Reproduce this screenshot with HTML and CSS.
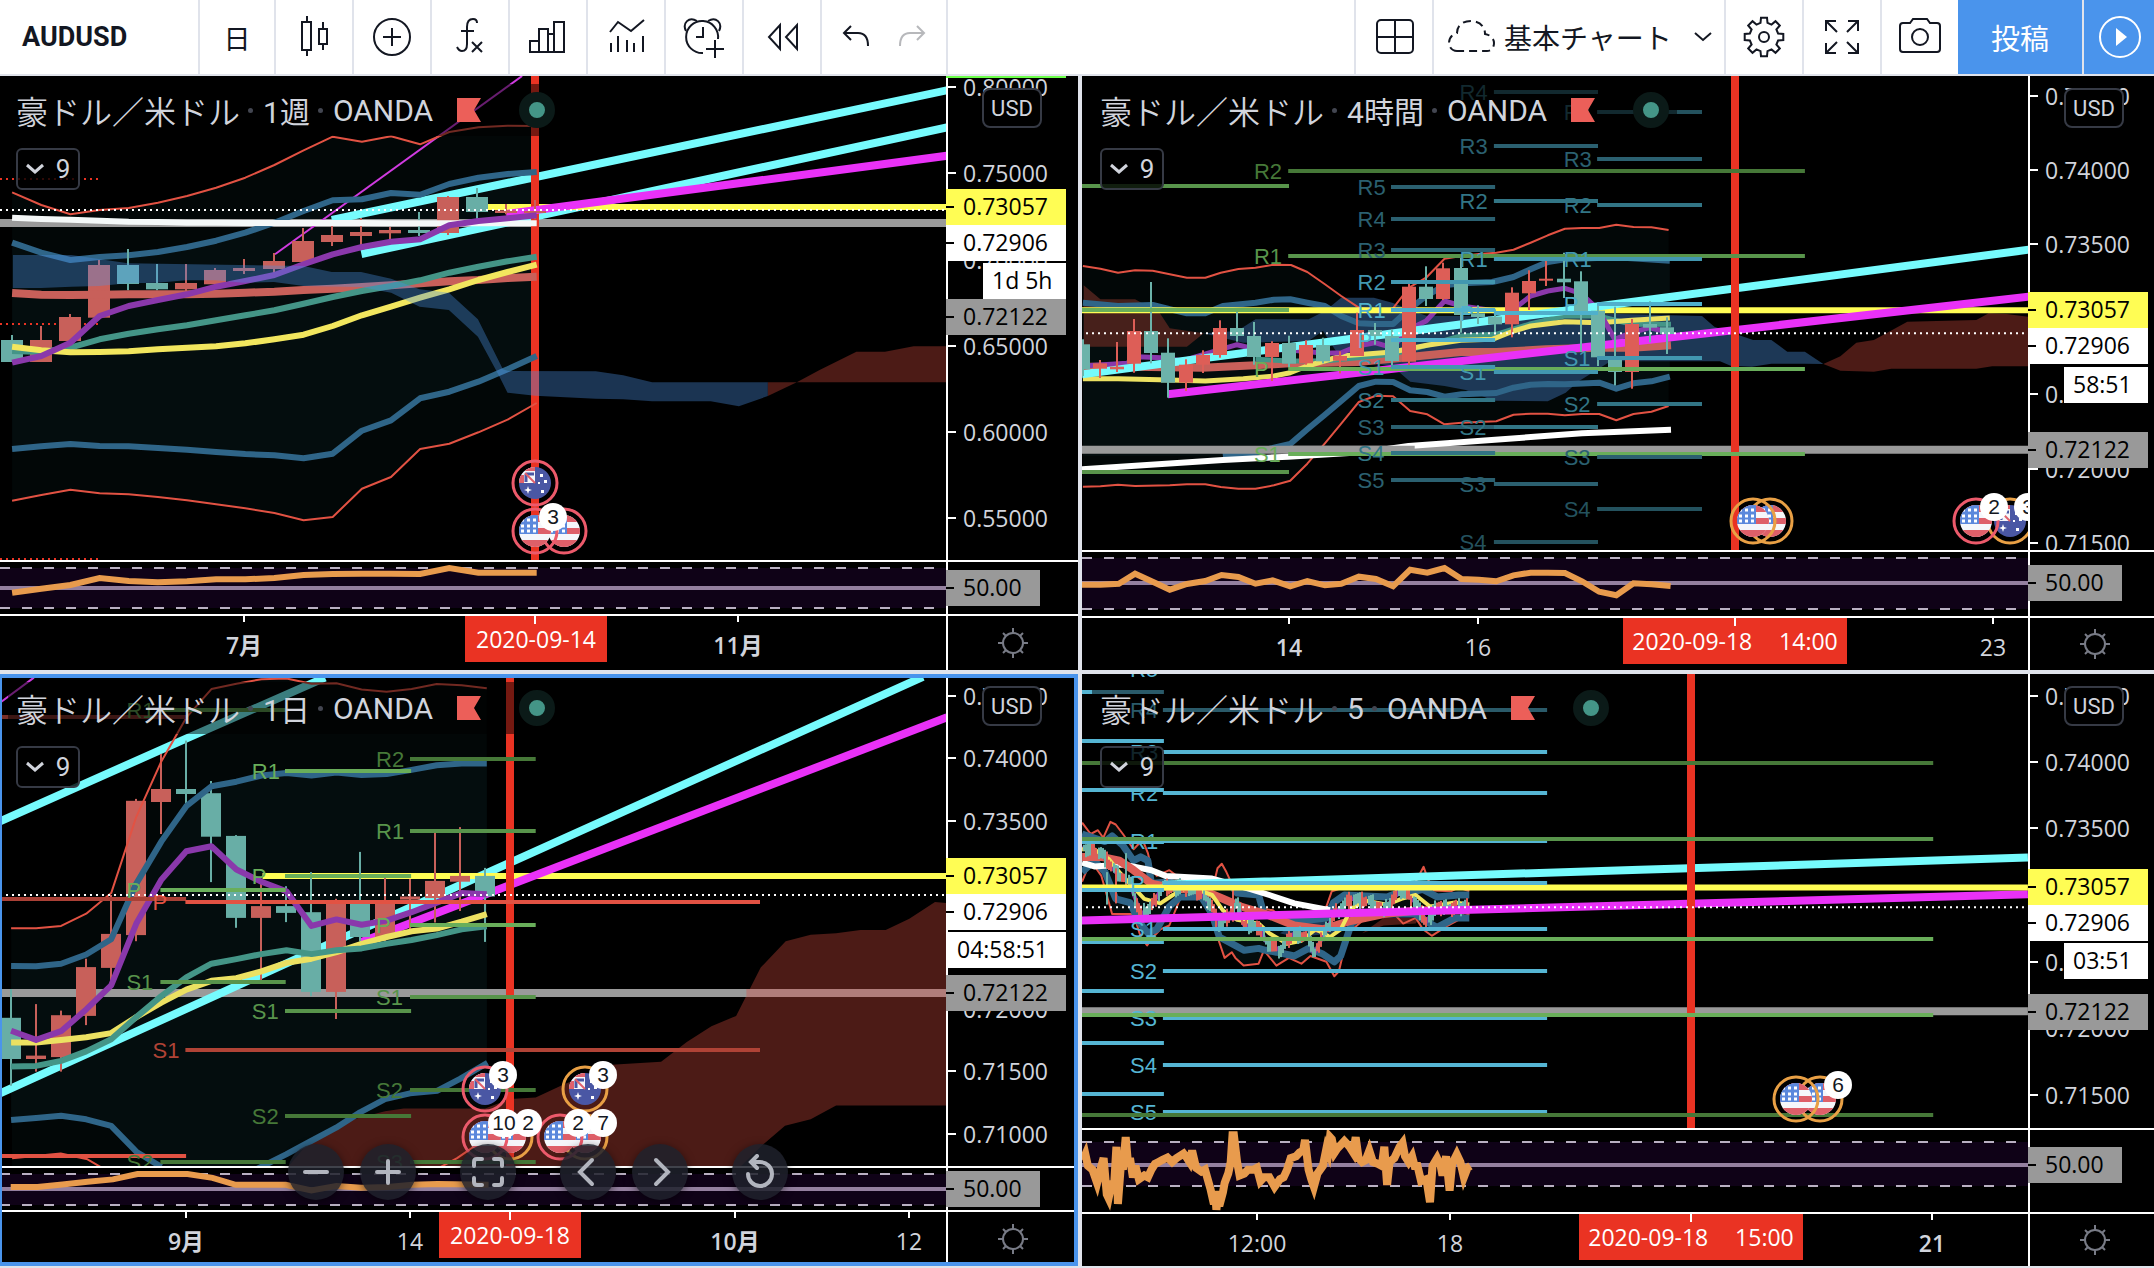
FILE: index.html
```html
<!DOCTYPE html>
<html lang="ja">
<head>
<meta charset="utf-8">
<title>AUDUSD チャート</title>
<link rel="stylesheet" href="styles.css">
</head>
<body>
<header class="toolbar">
  <button class="tool symbol">AUDUSD</button>
  <button class="tool tool-interval">日</button>
  <button class="tool" aria-label="ローソク足"><svg class="icon" viewBox="0 0 44 44"><path d="M10 7h9v28h-9zM15 1v6M15 35v6M27 14h8v15h-8zM31 7v7M31 29v6"/></svg></button>
  <button class="tool" aria-label="比較"><svg class="icon" viewBox="0 0 44 44"><circle cx="22" cy="22" r="18"/><path d="M22 13v18M13 22h18"/></svg></button>
  <button class="tool" aria-label="インジケーター"><svg class="icon" viewBox="0 0 44 44"><path d="M29 8c0-3-1-4-4-4-4 0-6 3-6 8v17c0 5-2 7-5 7-3 0-4-2-5-4M13 16h13M24 27l10 10M34 27L24 37"/></svg></button>
  <button class="tool" aria-label="財務"><svg class="icon" viewBox="0 0 44 44"><path d="M4 37V26h9V14h9v5h6V7h10v30zM13 26v11M22 19v18M28 19v18"/></svg></button>
  <button class="tool" aria-label="テンプレート"><svg class="icon" viewBox="0 0 44 44"><path d="M6 17l8-10 13 9L40 5M7 28v9M14 21v16M23 25v12M30 28v9M39 21v16"/></svg></button>
  <button class="tool" aria-label="アラート"><svg class="icon" viewBox="0 0 44 44"><path d="M21 38A16 16 0 1 1 36 24M21 12v10h-7M33 25v18M24 34h18"/><path d="M4 16C0 8 7 1 15 6M26 6c8-5 15 2 11 10"/></svg></button>
  <button class="tool" aria-label="リプレイ"><svg class="icon" viewBox="0 0 44 44"><path d="M20 10v24L9 22zM37 10v24L26 22z"/></svg></button>
  <div class="history">
    <button class="plain" aria-label="元に戻す"><svg class="icon" viewBox="0 0 44 44"><path d="M17 11l-7 7 7 7M10 18h14c6 0 10 4 10 13"/></svg></button>
    <button class="plain redo" aria-label="やり直す"><svg class="icon" viewBox="0 0 44 44"><path d="M27 11l7 7-7 7M34 18H20c-6 0-10 4-10 13"/></svg></button>
  </div>
  <div class="spacer"></div>
  <button class="tool" aria-label="レイアウト"><svg class="icon" viewBox="0 0 44 44"><rect x="5" y="5" width="36" height="33" rx="4"/><path d="M23 5v33M5 22h36"/></svg></button>
  <button class="tool layout-name">
    <svg class="icon cloud" viewBox="0 0 48 44"><path d="M9 36C4 36 1 32 1 28c0-6 4-9 8-10C9 10 15 6 23 6c8 0 14 5 14 13 6 1 9 5 9 9 0 5-3 8-7 8z"/></svg>
    <span>基本チャート</span>
    <svg class="chevron" viewBox="0 0 18 12"><path d="M1 2l8 7 8-7"/></svg>
  </button>
  <button class="tool" aria-label="設定"><svg class="icon" viewBox="0 0 44 44"><path d="M18.500 7.900L19 2.700H25L25.500 7.900L29.500 9.600L33.500 6.200L37.800 10.500L34.400 14.500L36.100 18.500L41.300 19V25L36.100 25.500L34.400 29.500L37.800 33.500L33.500 37.800L29.500 34.400L25.500 36.100L25 41.300H19L18.500 36.100L14.500 34.400L10.500 37.800L6.200 33.500L9.600 29.500L7.900 25.500L2.700 25V19L7.900 18.500L9.600 14.500L6.200 10.500L10.500 6.200L14.500 9.600Z"/><circle cx="22" cy="22" r="5"/></svg></button>
  <button class="tool" aria-label="全画面"><svg class="icon" viewBox="0 0 44 44"><path d="M6 16V6h10M6 6l11 11M28 6h10v10M38 6L27 17M6 28v10h10M6 38l11-11M28 38h10V28M38 38L27 27"/></svg></button>
  <button class="tool last" aria-label="スナップショット"><svg class="icon" viewBox="0 0 44 44"><path d="M5 8h7l3-4h14l3 4h7q3 0 3 3v23q0 3-3 3H5q-3 0-3-3V11q0-3 3-3z"/><circle cx="22" cy="22" r="8"/></svg></button>
  <button class="publish">投稿</button>
  <button class="play" aria-label="配信"><svg class="icon" viewBox="0 0 44 44"><circle cx="23" cy="22" r="20"/><path class="solid" d="M19 13v18l11-9z"/></svg></button>
</header>

<main class="charts">
  <section class="pane" data-pane="week">
    <div class="plot-row">
      <div class="plot"><svg class="canvas" data-part="plot"></svg>
        <div class="legend"><span>豪ドル／米ドル</span><i class="sep"></i><span>1週</span><i class="sep"></i><span>OANDA</span><svg class="flag" viewBox="0 0 24 24"><path d="M0 0h24l-7 12 7 12H0z"/></svg><i class="status"></i></div>
        <button class="toggle"><svg class="chevron" viewBox="0 0 18 12"><path d="M1 2l8 7 8-7"/></svg>9</button>
      </div>
      <div class="axis"><svg class="canvas" data-part="axis"></svg><button class="currency">USD</button></div>
    </div>
    <div class="rsi-row"><div class="plot"><svg class="canvas" data-part="rsi"></svg></div><div class="axis"><svg class="canvas" data-part="level"></svg></div></div>
    <div class="time-row"><div class="plot"><svg class="canvas" data-part="time"></svg></div><button class="corner" aria-label="軸の設定"><svg class="sun" viewBox="0 0 32 32"><use href="#sun"/></svg></button></div>
  </section>

  <section class="pane right" data-pane="hour4">
    <div class="plot-row">
      <div class="plot"><svg class="canvas" data-part="plot"></svg>
        <div class="legend"><span>豪ドル／米ドル</span><i class="sep"></i><span>4時間</span><i class="sep"></i><span>OANDA</span><svg class="flag" viewBox="0 0 24 24"><path d="M0 0h24l-7 12 7 12H0z"/></svg><i class="status"></i></div>
        <button class="toggle"><svg class="chevron" viewBox="0 0 18 12"><path d="M1 2l8 7 8-7"/></svg>9</button>
      </div>
      <div class="axis"><svg class="canvas" data-part="axis"></svg><button class="currency">USD</button></div>
    </div>
    <div class="rsi-row"><div class="plot"><svg class="canvas" data-part="rsi"></svg></div><div class="axis"><svg class="canvas" data-part="level"></svg></div></div>
    <div class="time-row"><div class="plot"><svg class="canvas" data-part="time"></svg></div><button class="corner" aria-label="軸の設定"><svg class="sun" viewBox="0 0 32 32"><use href="#sun"/></svg></button></div>
  </section>

  <section class="pane active" data-pane="day">
    <div class="plot-row">
      <div class="plot"><svg class="canvas" data-part="plot"></svg>
        <div class="legend"><span>豪ドル／米ドル</span><i class="sep"></i><span>1日</span><i class="sep"></i><span>OANDA</span><svg class="flag" viewBox="0 0 24 24"><path d="M0 0h24l-7 12 7 12H0z"/></svg><i class="status"></i></div>
        <button class="toggle"><svg class="chevron" viewBox="0 0 18 12"><path d="M1 2l8 7 8-7"/></svg>9</button>
      </div>
      <div class="axis"><svg class="canvas" data-part="axis"></svg><button class="currency">USD</button></div>
    </div>
    <div class="rsi-row"><div class="plot"><svg class="canvas" data-part="rsi"></svg></div><div class="axis"><svg class="canvas" data-part="level"></svg></div></div>
    <div class="time-row"><div class="plot"><svg class="canvas" data-part="time"></svg></div><button class="corner" aria-label="軸の設定"><svg class="sun" viewBox="0 0 32 32"><use href="#sun"/></svg></button></div>
    <div class="nav">
      <div class="nav-group">
        <button class="round" aria-label="縮小"><svg viewBox="0 0 36 36"><path d="M7 18h22"/></svg></button>
        <button class="round" aria-label="拡大"><svg viewBox="0 0 36 36"><path d="M7 18h22M18 7v22"/></svg></button>
      </div>
      <button class="round" aria-label="範囲"><svg viewBox="0 0 36 36"><path d="M4 12V8q0-3 3-3h5M24 5h5q3 0 3 3v4M32 24v4q0 3-3 3h-5M12 31H7q-3 0-3-3v-4"/></svg></button>
      <div class="nav-group">
        <button class="round" aria-label="左へ"><svg viewBox="0 0 36 36"><path d="M22 6L10 18l12 12"/></svg></button>
        <button class="round" aria-label="右へ"><svg viewBox="0 0 36 36"><path d="M14 6l12 12-12 12"/></svg></button>
      </div>
      <button class="round" aria-label="リセット"><svg viewBox="0 0 36 36"><path d="M6 20a12 12 0 1 0 12-12h-8M15 2L9 8l6 6"/></svg></button>
    </div>
  </section>

  <section class="pane right" data-pane="min5">
    <div class="plot-row">
      <div class="plot"><svg class="canvas" data-part="plot"></svg>
        <div class="legend"><span>豪ドル／米ドル</span><i class="sep"></i><span>5</span><i class="sep"></i><span>OANDA</span><svg class="flag" viewBox="0 0 24 24"><path d="M0 0h24l-7 12 7 12H0z"/></svg><i class="status"></i></div>
        <button class="toggle"><svg class="chevron" viewBox="0 0 18 12"><path d="M1 2l8 7 8-7"/></svg>9</button>
      </div>
      <div class="axis"><svg class="canvas" data-part="axis"></svg><button class="currency">USD</button></div>
    </div>
    <div class="rsi-row"><div class="plot"><svg class="canvas" data-part="rsi"></svg></div><div class="axis"><svg class="canvas" data-part="level"></svg></div></div>
    <div class="time-row"><div class="plot"><svg class="canvas" data-part="time"></svg></div><button class="corner" aria-label="軸の設定"><svg class="sun" viewBox="0 0 32 32"><use href="#sun"/></svg></button></div>
  </section>
</main>

<svg class="defs" aria-hidden="true">
  <defs>
    <g id="sun"><circle cx="16" cy="16" r="10"/><path d="M16 1v5M16 26v5M1 16h5M26 16h5M6 6l3 3M23 23l3 3M26 6l-3 3M9 23l-3 3"/></g>
    <clipPath id="disc"><circle r="16"/></clipPath>
    <g id="us" clip-path="url(#disc)">
      <path fill="#f5f6fa" d="M-16-16h32v32h-32z"/>
      <path fill="#de5f69" d="M-16-16h32v7h-32zM-16-3h32v6h-32zM-16 9h32v7h-32z"/>
      <path fill="#5b88dc" d="M-16-16H3V3h-19z"/>
      <path stroke="#fff" stroke-width="3" stroke-dasharray="3 3" d="M-14-11H2M-14-5H2M-14 0H2"/>
    </g>
    <g id="au" clip-path="url(#disc)">
      <path fill="#4a57a4" d="M-16-16h32v32h-32z"/>
      <path fill="#f5f6fa" d="M-16-16H0V0h-16z"/>
      <path fill="#e0616c" d="M-16-16H0v4h-16zM-16-8h5v8h-5z"/>
      <path stroke="#4a57a4" stroke-width="3" d="M-9-9H-1M-9-9V-1"/>
      <path stroke="#e0616c" stroke-width="2" d="M-10-10L0 0"/>
      <path fill="#fff" d="M-7 3l1 3 3 1-3 1-1 3-1-3-3-1 3-1zM6 7h3v3H6zM5-9h3v3H5zM9-3h3v3H9zM3-1h2v2H3z"/>
    </g>
  </defs>
</svg>
<script src="charts.js"></script>
</body>
</html>
```

FILE: styles.css
```css
* { box-sizing: border-box; }

body {
  margin: 0;
  height: 100vh;
  display: flex;
  flex-direction: column;
  background: #e0e3eb;
  font-family: Roboto, "Noto Sans CJK JP", sans-serif;
  color: #131722;
}

button {
  margin: 0;
  padding: 0;
  border: 0;
  background: none;
  color: inherit;
  font: inherit;
}

.defs { position: absolute; width: 0; height: 0; }

/* toolbar */
.toolbar {
  flex: none;
  display: flex;
  height: 76px;
  background: #fff;
  border-bottom: 2px solid #e0e3eb;
}
.tool {
  flex: none;
  width: 78px;
  display: flex;
  align-items: center;
  justify-content: center;
  border-right: 2px solid #e0e3eb;
}
.tool.last { width: 76px; border-right: 0; }
.tool-interval { width: 76px; font-size: 27px; }
.symbol {
  width: 200px;
  padding-left: 22px;
  justify-content: flex-start;
  font-size: 27px;
  font-weight: 700;
}
.icon { width: 44px; height: 44px; fill: none; stroke: #131722; stroke-width: 2; }
.history {
  flex: none;
  width: 126px;
  display: flex;
  align-items: center;
  justify-content: center;
  gap: 12px;
  border-right: 2px solid #e0e3eb;
}
.plain { width: 44px; height: 44px; }
.redo { opacity: .3; }
.spacer { flex: 1; border-right: 2px solid #e0e3eb; }
.layout-name {
  width: 292px;
  padding: 0 12px 0 14px;
  justify-content: flex-start;
  gap: 8px;
  font-size: 28px;
}
.cloud { width: 48px; stroke-dasharray: 8 5; }
.chevron { width: 18px; height: 12px; fill: none; stroke: currentColor; stroke-width: 2; }
.layout-name .chevron { margin-left: auto; }
.publish {
  flex: none;
  width: 124px;
  background: #4a94ec;
  color: #fff;
  font-size: 29px;
}
.play {
  flex: none;
  width: 72px;
  display: flex;
  align-items: center;
  justify-content: center;
  border-left: 2px solid #e0e3eb;
  background: #4a94ec;
}
.play .icon { stroke: #fff; }
.play .solid { fill: #fff; stroke: none; }

/* chart grid */
.charts {
  flex: 1;
  min-height: 0;
  display: grid;
  grid-template-columns: 1078fr 1072fr;
  grid-template-rows: 594fr 592fr;
  gap: 4px;
  padding-bottom: 2px;
}
.pane {
  position: relative;
  min-width: 0;
  min-height: 0;
  display: flex;
  flex-direction: column;
  background: #000;
  color: #d1d4dc;
}
.pane.active::after {
  content: "";
  position: absolute;
  inset: 0;
  border: 4px solid #4a94ec;
  border-left-width: 2px;
  pointer-events: none;
}
.plot-row, .rsi-row, .time-row { display: flex; }
.plot-row { flex: 1; min-height: 0; }
.rsi-row, .time-row { flex: none; border-top: 2px solid #fff; }
.rsi-row { height: 54px; }
.time-row { height: 56px; }
.right .time-row { height: 54px; }
[data-pane="hour4"] .rsi-row { height: 66px; }
[data-pane="day"] .rsi-row { height: 44px; }
[data-pane="min5"] .rsi-row { height: 84px; }
.plot { position: relative; flex: 1; min-width: 0; overflow: hidden; }
.axis { position: relative; flex: none; width: 132px; overflow: hidden; }
.right .axis { width: 126px; }
.canvas { display: block; width: 100%; height: 100%; }

.legend {
  position: absolute;
  top: 8px;
  left: 8px;
  height: 52px;
  padding: 0 8px;
  display: flex;
  align-items: center;
  background: rgba(0, 0, 0, .5);
  white-space: nowrap;
}
.legend span { font-size: 30px; }
.legend span:first-child { font-size: 32px; font-weight: 350; }
.right .legend { left: 10px; }
.sep {
  width: 5px;
  height: 5px;
  margin: 0 10px 0 8px;
  border-radius: 50%;
  background: #434651;
}
.flag { width: 24px; height: 24px; margin: 0 38px 0 24px; fill: #ec5f59; }
.status {
  width: 36px;
  height: 36px;
  border: 10px solid #0b1a18;
  border-radius: 50%;
  background: #449587;
}
.toggle {
  position: absolute;
  top: 72px;
  left: 16px;
  width: 64px;
  height: 42px;
  display: flex;
  align-items: center;
  justify-content: center;
  gap: 12px;
  border: 2px solid #363a45;
  border-radius: 6px;
  background: rgba(0, 0, 0, .8);
  font-size: 26px;
}
.right .toggle { left: 18px; }
.toggle .chevron { stroke-width: 3; }
.currency {
  position: absolute;
  top: 12px;
  left: 36px;
  width: 60px;
  height: 40px;
  border: 2px solid #363a45;
  border-radius: 8px;
  background: #000;
  font-size: 22px;
}
.corner {
  flex: none;
  width: 132px;
  display: flex;
  align-items: center;
  justify-content: center;
  border-left: 2px solid #fff;
}
.right .corner { width: 126px; padding-left: 6px; }
.sun { width: 32px; height: 32px; fill: none; stroke: #787b86; stroke-width: 2; }

/* floating controls of the active pane */
.nav {
  position: absolute;
  bottom: 66px;
  left: 0;
  right: 2px;
  z-index: 1;
  display: flex;
  justify-content: center;
  gap: 44px;
}
.nav-group { display: flex; gap: 16px; }
.round {
  width: 56px;
  height: 56px;
  display: flex;
  align-items: center;
  justify-content: center;
  border-radius: 50%;
  background: rgba(30, 33, 43, .85);
  box-shadow: 0 2px 8px rgba(0, 0, 0, .5);
}
.round svg { width: 36px; height: 36px; fill: none; stroke: #b2b5be; stroke-width: 4; stroke-linecap: round; }

/* drawn text */
.price, .tag-text, .date, .date-box { font-family: "Open Sans", "Noto Sans CJK JP", sans-serif; font-size: 23px; }
.price, .date { fill: #d1d4dc; font-weight: 500; }
.date.strong { font-weight: 600; }
.tag-text { fill: #000; }
.date-box { fill: #fff; }
.pivot { font-family: "Liberation Sans", sans-serif; font-size: 22px; }
.count { font-family: "Liberation Sans", sans-serif; font-size: 21px; fill: #131722; }
```

FILE: charts.js
```js
const RED = '#c8605a', GREEN = '#68aea6', BLUE = '#2f6588', CYAN = '#76fbfd', MAGENTA = '#e931f7';
const YELLOW = '#fffd54', CLOUD_UP = 'rgba(74,144,226,.36)', CLOUD_DOWN = '#4c1b16', LINE_RED = '#e25243';

// Series with evenly spaced bars: x start, x step, values
const even = (x0, dx, ys) => ys.flatMap((y, i) => [x0 + dx * i, y]);

// 5 minute price path
const path5 = [6,465,60,480,100,530,140,560,170,640,200,620,230,570,300,570,340,585,370,620,390,670,420,640,440,610,460,670,500,670,520,710,560,735,600,690,640,700,655,745,690,680,720,630,760,600,820,610,850,630,900,575,940,610,970,660,1000,620,1040,625,1090,615];

function bars5() {
  const out = [];
  for (let x = 10, n = 0; x < 1090; x += 6, n++) {
    let i = 0;
    while (i < path5.length - 4 && path5[i + 2] < x) i += 2;
    const t = (x - path5[i]) / (path5[i + 2] - path5[i]);
    const y = path5[i + 1] + t * (path5[i + 3] - path5[i + 1]);
    const a = 8 + (n * 37 % 17), b = 8 + (n * 53 % 19);
    out.push([x, y - a, y + b, y - a / 2, y + b / 2, n * 29 % 7 < 4 ? 'g' : 'r']);
  }
  out.push([128, 480, 560, 490, 540, 'g'], [429, 562, 660, 570, 640, 'r'], [102, 520, 612, 530, 600, 'r'], [76, 530, 615, 540, 600, 'g'], [898, 548, 600, 560, 590, 'g']);
  return out;
}

const W0 = 34, WD = 81.6, D0 = 31, DD = 70.1;
const wUp = even(W0, WD, [349,387,415,402,396,380,360,335,305,267,223,182,197,181,205,168,154,149,150]);
const wLow = even(W0, WD, [1274,1257,1241,1252,1255,1263,1273,1285,1297,1311,1333,1323,1238,1203,1119,1103,1069,1031,981]);
const wBlueUp = even(W0, WD, [500,530,552,543,538,528,513,494,470,440,405,373,370,351,356,324,305,294,288]);
const wBlueLow = even(W0, WD, [1119,1111,1104,1110,1111,1116,1121,1128,1134,1138,1147,1133,1064,1033,967,947,917,880,840]);
const hUp = [7,570,50,578,93,590,135,583,178,584,220,595,262,605,307,605,345,590,388,579,430,575,475,566,517,567,557,588,600,625,640,660,683,695,725,702,765,700,806,635,848,605,893,548,935,540,977,534,1020,530,1062,521,1104,500,1146,478,1188,458,1230,456,1272,456,1314,446,1356,453,1400,454,1442,462];
const hLow = [7,1232,50,1231,93,1226,135,1230,220,1228,262,1225,307,1225,345,1233,388,1238,430,1238,475,1228,515,1214,557,1163,600,1102,640,1043,683,978,725,959,767,961,809,1005,851,1015,893,1045,935,1040,1020,1036,1062,1016,1104,1013,1146,1013,1188,1018,1230,1014,1272,1014,1314,1033,1356,1014,1400,1007,1442,990];
const hBlueUp = [7,680,93,690,178,687,262,712,307,712,350,690,430,680,475,671,515,670,557,680,600,690,640,720,683,742,725,744,767,744,806,700,848,660,893,628,935,622,1010,618,1062,603,1104,580,1146,558,1188,550,1314,544,1445,554];
const hBlueLow = [350,1140,430,1130,475,1115,515,1104,557,1060,600,1016,640,975,683,930,725,917,767,918,809,943,851,948,893,962,935,955,1020,951,1062,935,1104,926,1146,924,1188,925,1272,920,1314,938,1356,922,1400,916,1445,902];
const dUp = even(D0, DD, [677,677,671,639,585,385,240,125,50,36,24,22,36,35,51,57,50,37,40,48]);
const dBlueUp = even(D0, DD, [776,777,770,746,706,560,450,357,305,293,277,270,277,269,275,273,262,250,245,245]);
const mUp = [6,400,30,430,50,420,65,440,85,398,100,405,120,430,150,470,175,445,190,480,200,520,215,540,250,525,300,560,340,560,375,560,385,520,397,508,410,530,420,550,440,575,500,580,510,625,540,630,580,660,620,650,650,640,690,620,705,580,740,570,800,575,860,575,900,560,940,555,962,516,975,550,990,578,1040,580,1060,570,1090,580];
const mLow = [6,555,30,500,60,540,90,640,115,640,150,640,170,700,188,722,205,700,225,680,250,670,280,600,340,600,370,640,385,700,405,755,425,740,435,755,458,775,500,770,515,735,550,775,585,755,620,770,645,750,690,765,712,803,725,790,750,690,800,650,880,640,905,665,940,650,960,680,985,697,1030,670,1090,640];

const reverse = p => { const o = []; for (let i = p.length - 2; i >= 0; i -= 2) o.push(p[i], p[i + 1]); return o; };

const green = ['#467838', '#58944b', '#69ae5a'];
const teal = ['#24525e', '#2b6070', '#327585', '#4297b0', '#4fb0cc'];

// view: horizontal units per px, vertical units per px, x shift, y shift
const panes = {
  week: {
    view: [2.8, 3, 0, 0],
    layers: [
      ['area', '#020707', [...wUp, ...reverse(wLow)]],
      ['area', '#040d0e', [...wBlueUp, ...reverse(wBlueLow)]],
      ['line', '#9a9a9a', 8, [0,441,2652,441]],
      ['line', CYAN, 8, [929,432,2652,43]],
      ['line', CYAN, 8, [1012,534,2652,154]],
      ['line', YELLOW, 6, [1366,393,2652,393]],
      ['line', '#d03be0', 2, [770,535,1462,0]],
      ['dots', '#ea3323', [0,309,280,309]], ['dots', '#ea3323', [0,744,280,744]], ['dots', '#ea3323', [0,1449,280,1449]],
      ['vline', 1498],
      ['line', MAGENTA, 8, [1417,414,2652,239]],
      ['line', LINE_RED, 2, wUp], ['line', LINE_RED, 2, wLow],
      ['line', BLUE, 6, wBlueUp], ['line', BLUE, 6, wBlueLow],
      ['bars', 31, [[34,777,858,792,858,'g'],[115,750,858,792,858,'r'],[196,714,795,723,795,'r'],[277,552,725,567,725,'r'],[358,519,643,567,624,'g'],[440,564,643,621,640,'g'],[521,564,645,621,640,'r'],[602,576,625,582,625,'r'],[683,549,594,576,585,'r'],[767,531,588,555,579,'r'],[848,456,558,495,558,'r'],[929,432,510,477,498,'r'],[1011,426,510,468,480,'r'],[1092,453,490,462,472,'r'],[1173,408,480,462,471,'g'],[1255,360,477,363,471,'r'],[1335,336,428,363,408,'g'],[1417,384,415,403,411,'r'],[1498,372,430,405,411,'r']]],
      ['line', '#f4f8f8', 6, even(W0, WD, [425,429,431,434,437,438,440,440,441,441,441,441,441,442,442,442,442,442,442])],
      ['line', RED, 8, even(W0, WD, [651,656,657,656,655,655,655,653,650,647,642,638,633,628,622,616,612,606,602])],
      ['line', '#449587', 6, even(W0, WD, [825,828,815,790,773,760,748,733,718,703,683,663,645,630,613,590,572,556,542])],
      ['line', '#f2e65e', 6, even(W0, WD, [812,823,829,828,826,820,815,811,802,790,776,750,718,692,665,640,612,588,566])],
      ['line', '#8a38ab', 6, even(W0, WD, [860,840,800,720,690,672,655,632,615,597,565,535,513,497,490,448,435,427,418])],
      ['area', CLOUD_UP, [36,537,200,537,358,562,850,570,929,588,1011,588,1095,608,1175,640,1257,650,1338,730,1408,880,1423,885,1668,886,1745,898,1826,919,2150,919,2150,960,2069,991,1990,976,1826,976,1745,970,1668,968,1498,959,1421,950,1395,895,1338,782,1257,702,1175,692,1095,650,1011,633,850,630,767,618,683,620,602,613,521,613,440,620,358,622,277,630,200,632,115,636,36,636]],
      ['area', CLOUD_DOWN, [2150,919,2231,919,2150,960]],
      ['area', CLOUD_DOWN, [2231,919,2295,882,2398,827,2478,827,2558,811,2652,811,2652,919]],
      ['dots', '#fff', [0,402,2652,402]]
    ],
    events: [['us',564,455,'#ec5a6b'],['us',535,455,'#ec5a6b'],['au',535,407,'#ec5a6b']],
    counts: [['3',553,441]],
    ticks: [['0.80000',11],['0.75000',97],['0.70000',184],['0.65000',270],['0.60000',356],['0.55000',442]],
    last: 131, timer: ['1d 5h', 37, 187, 46], grey: 241,
    rsi: { low: 6, mid: 26, high: 46, points: even(W0, WD, [92,80,69,48,57,61,58,52,52,48,39,36,35,35,36,18,32,32,32]), width: 6 },
    dates: [['7月',244,1],['11月',738,1]], box: ['2020-09-14', 465, 142, 535]
  },
  hour4: {
    view: [2.45, 3, -2, 0],
    layers: [
      ['area', '#020707', [...hUp, ...reverse(hLow)]],
      ['area', '#040d0e', [...hBlueUp, ...reverse(hBlueLow), 7,1140]],
      ['area', '#47201b', [9,628,50,670,135,670,195,710,220,757,303,772,262,812,9,812]],
      ['area', '#1d3856', [303,772,385,765,430,730,560,730,600,705,640,665,720,665,765,680,806,700,850,720,1100,720,1200,710,1524,720,1554,752,1649,792,1694,792,1733,827,1776,827,1821,864,1776,863,1694,863,1646,872,1594,869,1568,856,1300,856,1220,917,1190,950,1146,976,1015,974,945,942,893,930,809,917,765,870,640,850,595,765,560,795,400,800]],
      ['area', CLOUD_DOWN, [1821,864,1863,841,1902,800,1945,792,2027,737,2196,732,2226,712,2270,714,2325,723,2325,871,2235,871,2196,878,1988,878,1945,887,1863,884]],
      ['line', LINE_RED, 2, hUp], ['line', LINE_RED, 2, hLow],
      ['line', BLUE, 6, hBlueUp], ['line', BLUE, 6, hBlueLow],
      ['line', '#9a9a9a', 8, [0,1121,2325,1121]],
      ['line', '#fff', 6, [0,1180,350,1152,510,1142,700,1128,805,1110,1230,1072,1448,1061]],
      ['line', '#9a9a9a', 8, [515,1121,820,1121]],
      ['line', RED, 8, [7,872,130,872,300,875,430,868,515,862,600,860,680,858,765,848,850,838,933,828,1020,828,1142,820,1269,815,1352,815,1448,808]],
      ['line', '#449587', 5, [430,850,515,855,600,855,765,835,850,808,933,780,1020,775,1100,745,1186,720,1269,720,1352,745,1448,745]],
      ['line', '#ece162', 5, [7,908,93,908,220,912,307,915,400,908,475,900,515,890,557,870,640,840,765,828,850,808,933,793,1010,790,1062,765,1104,750,1188,737,1272,740,1352,733,1445,726]],
      ['line', '#8a38ab', 5, [7,870,115,862,140,842,200,845,250,855,345,820,385,806,430,820,515,822,600,832,640,830,680,810,722,800,765,815,806,760,848,735,893,675,935,690,1017,705,1062,700,1104,660,1146,645,1188,637,1227,652,1269,700,1310,790,1352,770,1396,755,1448,770]],
      ['line', YELLOW, 6, [0,703,2325,703]],
      ['line', CYAN, 8, [5,895,2325,521]],
      ['line', MAGENTA, 8, [215,955,2325,662]],
      ['bars', 17, [[7,790,900,805,880,'g'],[49,852,906,862,878,'r'],[90,798,888,872,880,'r'],[132,729,890,765,863,'r'],[174,618,862,765,831,'g'],[215,787,965,830,920,'g'],[260,850,945,866,920,'r'],[301,823,891,837,866,'r'],[343,733,845,756,837,'r'],[385,708,797,756,780,'g'],[426,738,866,780,843,'g'],[470,796,915,801,843,'r'],[512,779,873,801,863,'g'],[554,793,866,807,862,'r'],[595,785,862,807,856,'g'],[637,826,892,840,854,'r'],[679,710,840,762,840,'r'],[722,741,806,762,780,'g'],[765,760,870,780,855,'g'],[806,616,872,632,857,'r'],[848,571,690,632,669,'g'],[889,560,672,577,669,'r'],[933,544,770,576,717,'g'],[975,688,744,712,723,'g'],[1017,700,778,722,745,'g'],[1059,634,784,650,745,'r'],[1100,583,702,615,652,'r'],[1142,535,630,608,613,'r'],[1186,530,666,608,619,'g'],[1227,586,828,616,708,'g'],[1269,682,870,704,844,'g'],[1310,692,928,843,888,'g'],[1352,729,938,744,888,'r'],[1396,676,799,744,755,'g'],[1438,724,834,754,774,'g']], '#dd5e57', '#6cb3aa'],
      ['vline', 1605],
      ['pivots', 5, 512, 84, [['',330,green[1]],['',703,green[2]],['',1187,green[1]]]],
      ['pivots', 510, 1776, 84, [['R2',285,green[0]],['R1',541,green[1]],['P',878,green[2]],['S1',1133,green[2]]]],
      ['pivots', 762, 1017, 82, [['R5',333,teal[1]],['R4',429,teal[1]],['R3',522,teal[1]],['R2',619,teal[3]],['R1',701,teal[4]],['P',793,teal[4]],['S1',874,teal[3]],['S2',971,teal[2]],['S3',1053,teal[1]],['S4',1130,teal[2]],['S5',1211,teal[1]]]],
      ['pivots', 1014, 1269, 84, [['R4',47,teal[0]],['R3',210,teal[1]],['R2',375,teal[2]],['R1',550,teal[3]],['P',712,teal[4]],['S1',888,teal[3]],['S2',1052,teal[2]],['S3',1224,teal[1]],['S4',1398,teal[0]]]],
      ['pivots', 1267, 1524, 82, [['R4',108,teal[0]],['R3',249,teal[1]],['R2',387,teal[2]],['R1',548,teal[3]],['P',685,teal[4]],['S1',845,teal[3]],['S2',983,teal[2]],['S3',1143,teal[1]],['S4',1299,teal[0]]]],
      ['dots', '#fff', [0,772,2325,772]]
    ],
    events: [['us',688,445,'#e9a045'],['us',671,445,'#e9a045'],['au',928,445,'#e9a045'],['us',894,445,'#ec5a6b']],
    counts: [['2',912,431],['3',946,431]],
    ticks: [['0.74500',20],['0.74000',94],['0.73500',168],['0.72500',318],['0.72000',393],['0.71500',467]],
    last: 234, timer: ['58:51', 36, 291, 45], grey: 374,
    rsi: { low: 6, mid: 31, high: 57, width: 6, points: [5,98,50,98,95,95,135,65,178,89,220,113,262,96,307,87,347,69,388,75,430,95,472,85,515,103,557,87,600,100,640,95,683,74,725,81,767,103,809,53,851,62,893,48,935,81,977,83,1020,88,1062,70,1104,62,1146,62,1188,63,1230,88,1272,119,1314,130,1356,94,1400,97,1447,102] },
    dates: [['14',207,1],['16',396,0],['23',911,0]], box: ['2020-09-18\u2003\u200914:00', 541, 224, 653]
  },
  day: {
    view: [2.8, 2.622, 0, -4],
    layers: [
      ['area', '#020707', [...dUp, 1363,1310,34,1310]],
      ['area', '#040d0e', [...dBlueUp, 1363,1030,1288,1072,1225,1103,1148,1110,1078,1125,941,1200,735,1310,440,1300,381,1263,311,1195,241,1178,171,1169,31,1180]],
      ['area', CLOUD_DOWN, [800,1310,850,1255,960,1185,1078,1157,1130,1150,1358,1150,1428,1125,1500,1121,1575,1088,1712,1035,1851,1027,1923,975,1992,934,2061,907,2130,780,2200,711,2270,694,2341,690,2409,682,2480,682,2546,652,2618,608,2652,611,2652,1142,2341,1142,2270,1178,2198,1195,2130,1250,2065,1310]],
      ['line', '#9a9a9a', 8, [0,847,2095,847]], ['line', '#b07d7a', 8, [2090,847,2652,847]],
      ['line', CYAN, 8, [0,397,521,180,910,20]],
      ['line', CYAN, 8, [0,1110,930,715,2584,18]],
      ['line', YELLOW, 6, [735,540,2652,540]],
      ['line', MAGENTA, 8, [1010,714,2652,124]],
      ['line', '#d03be0', 2, [0,86,95,20]],
      ['bars', 28, [[31,837,1090,912,1020,'g'],[101,876,1053,1011,1020,'r'],[171,893,1053,905,1015,'r'],[241,757,931,779,907,'r'],[311,590,820,692,781,'r'],[381,338,711,343,695,'r'],[451,220,430,312,346,'r'],[521,185,350,312,325,'g'],[591,291,556,323,437,'g'],[661,433,676,435,650,'g'],[731,560,815,619,650,'r'],[801,567,661,619,637,'g'],[871,530,855,635,844,'g'],[941,600,915,612,844,'r'],[1008,477,712,612,700,'g'],[1078,545,712,612,700,'r'],[1148,548,680,594,602,'r'],[1218,420,662,553,598,'r'],[1288,412,632,540,555,'r'],[1358,519,713,540,594,'g']]],
      ['line', LINE_RED, 2, dUp], ['line', LINE_RED, 2, [34,1280,170,1268,245,1283,285,1305]], ['line', LINE_RED, 2, [1220,1310,1280,1280,1358,1230]],
      ['line', BLUE, 6, dBlueUp], ['line', BLUE, 6, even(D0, DD, [1180,1175,1169,1178,1195,1263,1303])],
      ['line', BLUE, 6, [720,1308,801,1270,871,1235,941,1200,1008,1160,1078,1125,1148,1110,1225,1103,1288,1072,1365,1030]],
      ['line', '#ece162', 6, even(D0, DD, [977,977,970,963,952,910,872,838,815,808,790,768,757,740,718,700,685,678,660,640])],
      ['line', '#449587', 6, even(D0, DD, [1040,1038,1025,1000,968,910,855,806,770,758,745,735,745,735,730,718,708,695,680,672])],
      ['line', '#8a38ab', 6, even(D0, DD, [946,970,947,890,827,665,550,475,462,523,555,580,671,654,668,657,635,610,585,588])],
      ['vline', 1428],
      ['pivots', 0, 521, 92, [['',123,'#7a2f28'],['',600,'#a94036'],['',1274,LINE_RED]]],
      ['pivots', 519, 2128, 92, [['P',608,LINE_RED],['S1',996,'#b04336']]],
      ['pivots', 449, 800, 95, [['R1',105,green[1]],['P',577,green[2]],['S1',818,green[1]],['S2',1290,green[0]]]],
      ['pivots', 798, 1151, 93, [['R1',265,green[2]],['P',540,green[2]],['S1',894,green[1]],['S2',1169,green[0]]]],
      ['pivots', 1148, 1500, 95, [['R2',233,green[0]],['R1',422,green[1]],['P',668,green[2]],['S1',857,green[1]],['S2',1101,green[0]],['S3',1290,green[0]]]],
      ['dots', '#fff', [0,590,2652,590]]
    ],
    events: [['au',485,415,'#ec5a6b'],['au',585,415,'#e9a045'],['us',510,463,'#e9a045'],['us',485,463,'#ec5a6b'],['us',585,463,'#e9a045'],['us',560,463,'#ec5a6b']],
    counts: [['3',503,401],['3',603,401],['2',528,449],['10',504,449],['7',603,449],['2',578,449]],
    ticks: [['0.74500',22],['0.74000',84],['0.73500',147],['0.72000',335],['0.71500',397],['0.71000',460]],
    last: 202, timer: ['04:58:51', 2, 258, 11], grey: 319,
    rsi: { low: 6, mid: 21, high: 37, width: 6, points: [30,50,105,50,175,43,245,36,316,30,385,16,525,16,595,26,660,44,800,44,872,59,942,47,1012,52,1085,50,1155,44,1225,42,1368,44] },
    dates: [['9月',186,1],['14',410,0],['10月',735,1],['12',909,0]], box: ['2020-09-18', 439, 142, 510]
  },
  min5: {
    view: [2.8, 2.622, -2, -4],
    layers: [
      ['area', '#040d0e', [...mUp, ...reverse(mLow)]],
      ['area', '#1d3856', [560,690,620,655,690,660,720,690,600,700]],
      ['area', CLOUD_DOWN, [790,690,850,650,950,650,940,665,850,670]],
      ['line', LINE_RED, 2, mUp], ['line', LINE_RED, 2, mLow],
      ['line', BLUE, 7, [6,430,70,450,90,435,120,460,150,500,170,490,190,500,200,560,250,555,300,575,350,560,420,560,440,585,500,590,515,640,600,660,690,650,710,610,740,590,860,595,900,580,940,580,960,575,1000,595,1060,590,1090,590]],
      ['line', BLUE, 7, [6,530,40,500,70,530,100,600,140,610,165,660,190,690,215,680,250,620,280,595,340,595,370,640,390,700,420,715,460,735,500,730,520,735,550,740,600,750,640,730,680,745,712,765,730,750,760,665,800,640,870,640,940,640,970,660,1000,675,1050,650,1090,650]],
      ['line', '#9a9a9a', 8, [0,895,2654,895]],
      ['line', '#fff', 6, [6,505,40,515,120,510,200,525,240,540,370,547,480,575,530,590,600,612,700,630]],
      ['line', '#dd5e57', 8, [6,490,60,490,110,500,150,525,200,560,250,570,350,580,400,600,450,620,520,640,600,670,680,680,750,660,850,640,950,630,1090,630]],
      ['line', '#8a38ab', 4, path5],
      ['line', '#f2e65e', 4, [6,470,40,470,80,495,110,530,140,560,180,600,225,612,260,590,300,570,340,580,370,590,400,630,440,655,500,665,530,690,580,718,620,710,660,680,700,700,730,680,760,625,800,605,860,615,900,600,940,590,980,620,1050,610,1090,615]],
      ['bars', 2, bars5(), '#dd5e57', '#6cb3aa'],
      ['line', MAGENTA, 8, [0,657,2654,588]],
      ['line', CYAN, 8, [235,563,1568,524,2654,492]],
      ['line', YELLOW, 6, [0,570,2654,570]],
      ['vline', 1710],
      ['pivots', 0, 235, 92, [['',57,'#55b5d3'],['',186,'#55b5d3'],['',315,'#55b5d3'],['',450,'#55b5d3'],['',578,'#55b5d3'],['',713,'#55b5d3'],['',841,'#55b5d3'],['',977,'#55b5d3'],['',1112,'#55b5d3']]],
      ['pivots', 232, 1308, 92, [['R5',-2,'#55b5d3'],['R4',105,'#55b5d3'],['R3',215,'#55b5d3'],['R2',323,'#55b5d3'],['R1',448,'#55b5d3'],['P',558,'#55b5d3'],['S1',680,'#55b5d3'],['S2',788,'#55b5d3'],['S3',912,'#55b5d3'],['S4',1035,'#55b5d3'],['S5',1159,'#55b5d3']]],
      ['pivots', 0, 2389, 92, [['',244,green[0]],['',444,green[1]],['',704,green[2]],['',905,green[2]],['',1167,green[0]]]],
      ['dots', '#fff', [0,622,2654,622]]
    ],
    events: [['us',738,425,'#e9a045'],['us',714,425,'#e9a045']],
    counts: [['6',756,411]],
    ticks: [['0.74500',22],['0.74000',88],['0.73500',154],['0.72500',288],['0.72000',354],['0.71500',421]],
    last: 213, timer: ['03:51', 36, 269, 45], grey: 338,
    rsi: { low: 12, mid: 35, high: 56, width: 8, points: [8,79,15,64,22,94,35,104,48,139,60,94,66,74,75,169,80,179,90,134,95,154,102,44,106,194,115,84,120,104,128,19,135,94,140,74,148,124,155,94,165,129,180,119,190,124,200,104,210,89,220,84,230,79,245,72,258,84,270,74,290,62,300,74,307,84,314,54,325,99,340,109,350,104,365,154,375,194,378,160,382,209,386,175,390,199,400,164,405,139,415,114,422,84,427,14,431,14,440,84,447,119,460,114,470,104,485,104,495,99,505,134,515,124,530,124,545,149,560,129,570,124,580,104,590,74,605,69,615,59,625,54,630,26,640,104,648,130,655,149,665,114,680,94,690,49,695,60,700,19,705,24,713,59,720,49,730,39,740,29,755,44,765,59,772,19,780,74,790,84,800,79,810,54,820,84,835,89,845,94,852,44,860,144,867,84,880,74,895,44,903,34,910,69,920,84,930,69,937,94,945,94,955,134,970,129,980,189,987,94,1000,74,1010,94,1015,119,1025,69,1035,159,1042,89,1055,64,1065,84,1075,124,1085,99,1093,94] },
    dates: [['12:00',175,0],['18',368,0],['21',850,1]], box: ['2020-09-18\u2003\u200915:00', 497, 224, 609]
  }
};

const rect = (x, y, w, h, fill) => `<rect x="${x}" y="${y}" width="${w}" height="${h}" fill="${fill}"/>`;
const text = (cls, x, y, s, extra = '') => `<text class="${cls}" x="${x}" y="${y}" ${extra}>${s}</text>`;

function plot(p) {
  const [kx, ky, ox, oy] = p.view;
  const X = v => +(v / kx + ox).toFixed(1), Y = v => +(v / ky + oy).toFixed(1);
  const pts = a => { let s = ''; for (let i = 0; i < a.length; i += 2) s += `${X(a[i])},${Y(a[i + 1])} `; return s; };
  const draw = {
    area: (c, a) => `<polygon fill="${c}" points="${pts(a)}"/>`,
    line: (c, w, a) => `<polyline fill="none" stroke="${c}" stroke-width="${w}" stroke-linejoin="round" points="${pts(a)}"/>`,
    dots: (c, a) => `<polyline fill="none" stroke="${c}" stroke-width="2" stroke-dasharray="2 4" points="${pts(a)}"/>`,
    vline: x => rect(Math.round(X(x)) - 4, 0, 8, '100%', '#ea3323'),
    bars: (hw, rows, r = RED, g = GREEN) => rows.map(([x, hi, lo, t, b, c]) => {
      const col = c === 'r' ? r : g, w = Math.max(2, Math.round(hw * 2 / kx));
      return rect(Math.round(X(x)) - 1, Y(hi), 2, Math.max(1, Y(lo) - Y(hi)), col) + rect(Math.round(X(x) - w / 2), Y(t), w, Math.max(2, Y(b) - Y(t)), col);
    }).join(''),
    pivots: (x1, x2, dx, rows) => rows.map(([s, y, c]) =>
      rect(X(x1), Math.round(Y(y)) - 2, X(x2) - X(x1), 4, c) + (s ? text('pivot', X(x1 - dx), Math.round(Y(y)) + 8, s, `fill="${c}"`) : '')).join('')
  };
  let out = p.layers.map(([kind, ...args]) => draw[kind](...args)).join('');
  out += p.events.map(([id, x, y, c]) => `<g transform="translate(${x} ${y})"><use href="#${id}"/><circle r="22" fill="none" stroke="${c}" stroke-width="3"/></g>`).join('');
  out += p.counts.map(([n, x, y]) => `<rect x="${x - (n.length > 1 ? 16 : 14)}" y="${y - 14}" width="${n.length > 1 ? 32 : 28}" height="28" rx="14" fill="#fff"/>` + text('count', x, y + 7, n, 'text-anchor="middle"')).join('');
  return out;
}

function tag(y, fill, s) {
  return rect(0, y - 18, s === '50.00' ? 94 : 120, 36, fill) + rect(0, y - 1, 8, 2, '#000') + text('tag-text', 17, y + 8, s);
}

function axis(p) {
  const [t, bx, by, tx] = p.timer;
  return rect(0, 0, 2, '100%', '#fff') +
    p.ticks.map(([s, y]) => rect(2, y - 1, 8, 2, '#fff') + text('price', 17, y + 9, s)).join('') +
    (p === panes.week ? rect(0, 0, 120, 2, '#6dff4a') : '') +
    tag(p.last, YELLOW, '0.73057') + tag(p.last + 36, '#fff', '0.72906') +
    rect(bx, by, 120 - bx, 36, '#fff') + text('tag-text', tx, by + 26, t) +
    tag(p.grey, '#999', '0.72122');
}

function rsi(p) {
  const r = p.rsi, [kx, ky, ox] = p.view;
  let s = '';
  for (let i = 0; i < r.points.length; i += 2) s += `${(r.points[i] / kx + ox).toFixed(1)},${(r.points[i + 1] / ky).toFixed(1)} `;
  const dash = y => `<line x1="0" x2="100%" y1="${y}" y2="${y}" stroke="#b9b0c2" stroke-width="2" stroke-dasharray="10 12"/>`;
  return rect(0, r.low, '100%', r.high - r.low, '#0f0217') + rect(0, r.mid - 2, '100%', 4, '#94809f') + dash(r.low) + dash(r.high) +
    `<polyline fill="none" stroke="#e89b4d" stroke-width="${r.width}" points="${s}"/>`;
}

function time(p) {
  const [s, x, w, t] = p.box;
  return p.dates.map(([d, dx, b]) => rect(dx - 1, 0, 2, 6, '#fff') + text(b ? 'date strong' : 'date', dx, 38, d, 'text-anchor="middle"')).join('') +
    rect(x, 0, w, 46, '#ea3323') + rect(t - 1, 0, 2, 8, '#fff') + text('date-box', x + w / 2, 32, s, 'text-anchor="middle"');
}

const level = p => rect(0, 0, 2, '100%', '#fff') + tag(p.rsi.mid, '#999', '50.00');
const parts = { plot, axis, rsi, level, time };

document.querySelectorAll('.pane').forEach(el => {
  const p = panes[el.dataset.pane];
  el.querySelectorAll('[data-part]').forEach(svg => { svg.innerHTML = parts[svg.dataset.part](p); });
});
```
